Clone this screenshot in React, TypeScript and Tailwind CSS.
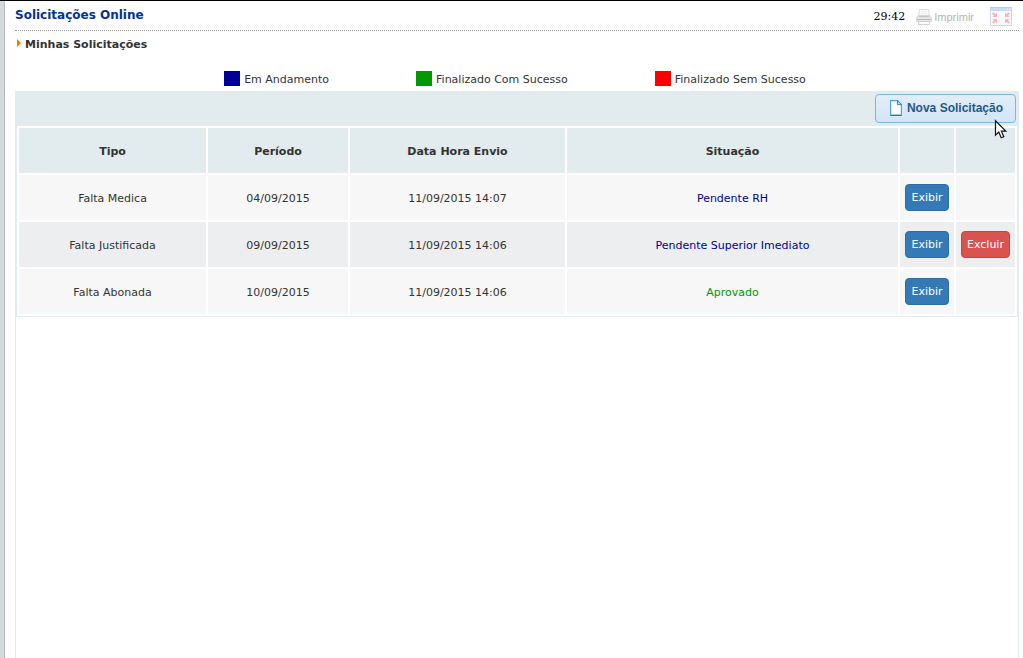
import React from "react";

type Status = "open" | "done";

interface RequestRow {
  type: string;
  period: string;
  sent: string;
  status: string;
  kind: Status;
  removable?: boolean;
}

const rows: RequestRow[] = [
  { type: "Falta Medica", period: "04/09/2015", sent: "11/09/2015 14:07", status: "Pendente RH", kind: "open" },
  { type: "Falta Justificada", period: "09/09/2015", sent: "11/09/2015 14:06", status: "Pendente Superior Imediato", kind: "open", removable: true },
  { type: "Falta Abonada", period: "10/09/2015", sent: "11/09/2015 14:06", status: "Aprovado", kind: "done" },
];

const statusColor: Record<Status, string> = {
  open: "text-[#000099]",
  done: "text-[#009900]",
};

function PrinterIcon() {
  return (
    <svg width="16" height="16" viewBox="0 0 16 16" aria-hidden="true">
      <path d="M2.5 7.5L3.5 .5H12.5L13.5 7.5Z" fill="#fafafa" stroke="#dcdcdc" />
      <path d="M5 2.5H11M5 4.5H11" stroke="#f0f0f0" />
      <path d="M2 6.5H14L15.5 9V12.5H.5V9Z" fill="#e4e4e4" stroke="#d8d8d8" />
      <path d="M3 7.5H13" stroke="#c4c4c4" />
      <path d="M1 10.5H15" stroke="#bdbdbd" />
      <path d="M2.5 12.5H13.5V15.5H2.5Z" fill="#fafafa" stroke="#d4d4d4" />
    </svg>
  );
}

function RestoreIcon() {
  return (
    <svg width="22" height="19" viewBox="0 0 22 19" aria-hidden="true">
      <rect x=".5" y=".5" width="21" height="18" fill="#f7faff" stroke="#c8d8f2" />
      <rect x="1" y="1" width="20" height="3" fill="#c9dbf8" />
      <path d="M0 .5H22" stroke="#b6cbef" />
      <path d="M17 2.5H18M19 2.5H20" stroke="#eef4fd" />
      <g fill="#fcb6ac">
        <path d="M7 5.5V10H2.5L4 8.5L2 6.7L3.4 5.3L5.4 7.1Z" />
        <path d="M15 5.5V10H19.5L18 8.5L20 6.7L18.6 5.3L16.6 7.1Z" />
        <path d="M7 16.5V12H2.5L4 13.5L2 15.3L3.4 16.7L5.4 14.9Z" />
        <path d="M15 16.5V12H19.5L18 13.5L20 15.3L18.6 16.7L16.6 14.9Z" />
      </g>
    </svg>
  );
}

function PageIcon() {
  return (
    <svg width="12" height="16" viewBox="0 0 12 16" aria-hidden="true">
      <path d="M.6 .6H7.6L11.4 4.4V15.4H.6Z" fill="#fff" stroke="#4ba3d3" strokeWidth="1.2" />
      <path d="M7.4 .6V4.6H11.4Z" fill="#cfe9f7" stroke="#2e86bd" />
      <path d="M1 15.3H11" stroke="#1f78b0" strokeWidth="1.2" />
    </svg>
  );
}

function Pointer() {
  return (
    <svg className="pointer-events-none absolute top-[28px] right-[10px]" width="14" height="21" viewBox="0 0 14 21" aria-hidden="true">
      <path d="M1.5 1.8V16.2L4.8 13L7.2 18.8L9.8 17.7L7.4 12.2H11.8Z" fill="#fff" stroke="#111" strokeWidth="1.2" />
    </svg>
  );
}

function Legend({ color, label }: { color: string; label: string }) {
  return (
    <li className="flex gap-1">
      <span className={`h-[15px] w-4 ${color}`} />
      <span className="pt-px">{label}</span>
    </li>
  );
}

export default function App() {
  const cell = "px-0 pt-[2px] pb-0 text-center";
  const actionCell = "p-0 text-center";
  const head = "h-[45px] bg-[#e2ebed] px-0 pt-[2px] pb-0 text-center font-bold";
  const action = "block mx-auto h-[27px] rounded border px-[5px] pt-px text-white";
  return (
    <div className="flex min-h-screen flex-col border-t border-black bg-white font-['DejaVu_Sans',Verdana,sans-serif] text-[11px] leading-4 text-[#333333]">
      <div className="flex grow border-l-4 border-[#d3dadd]">
        <main className="flex grow flex-col border-l border-[#b9bcbe] pr-1 pl-[10px]">
          <header className="flex h-[30px] items-center justify-between border-b border-dotted border-[#999999] pt-[2px] pr-[7px]">
            <h1 className="pb-1 text-xs font-bold text-[#003399]">Solicitações Online</h1>
            <div className="flex items-center">
              <time className="font-['DejaVu_Serif',serif] text-black">29:42</time>
              <a href="#imprimir" className="ml-[11px] flex items-center gap-[2px] font-['Liberation_Sans',Arial,sans-serif] text-[#b3b3b3]">
                <PrinterIcon />
                Imprimir
              </a>
              <button type="button" aria-label="Restaurar" className="ml-4">
                <RestoreIcon />
              </button>
            </div>
          </header>

          <h2 className="flex items-center gap-1 pt-[6px] font-bold">
            <svg className="ml-[2px] mb-1" width="4" height="8" viewBox="0 0 4 8" aria-hidden="true">
              <path d="M0 0L4 4L0 8Z" fill="#ff7200" />
            </svg>
            Minhas Solicitações
          </h2>

          <ul className="flex justify-center gap-[87px] pt-[18px] pr-1 pb-[3px]">
            <Legend color="bg-[#000099]" label="Em Andamento" />
            <Legend color="bg-[#009900]" label="Finalizado Com Sucesso" />
            <Legend color="bg-[#ff0000]" label="Finalizado Sem Sucesso" />
          </ul>

          <section className="grow border-x border-[#e2ebed]">
            <div className="relative flex h-[34px] items-center justify-end bg-[#e2ebed] pr-[2px]">
              <button
                type="button"
                className="flex h-[29px] items-center gap-[5px] rounded border border-[#79b7e7] bg-linear-to-b from-[#e2eef9] to-[#d3e5f5] pr-3 pl-[14px] font-['Liberation_Sans',Arial,sans-serif] text-xs font-bold text-[#1d5987]"
              >
                <PageIcon />
                Nova Solicitação
              </button>
              <Pointer />
            </div>
            <table className="w-full table-fixed border-separate border-spacing-[2px] border border-[#e2ebed]">
              <colgroup>
                <col className="w-[187px]" />
                <col className="w-[140px]" />
                <col className="w-[215px]" />
                <col />
                <col className="w-[54px]" />
                <col className="w-[59px]" />
              </colgroup>
              <thead>
                <tr>
                  <th className={head}>Tipo</th>
                  <th className={head}>Período</th>
                  <th className={head}>Data Hora Envio</th>
                  <th className={head}>Situação</th>
                  <td className={head} />
                  <td className={head} />
                </tr>
              </thead>
              <tbody>
                {rows.map((row) => (
                  <tr key={row.type} className="h-[45px] bg-[#f7f7f7] even:bg-[#eceef0]">
                    <td className={cell}>{row.type}</td>
                    <td className={cell}>{row.period}</td>
                    <td className={cell}>{row.sent}</td>
                    <td className={`${cell} ${statusColor[row.kind]}`}>{row.status}</td>
                    <td className={actionCell}>
                      <button type="button" className={`${action} border-[#2e6da4] bg-[#337ab7]`}>Exibir</button>
                    </td>
                    <td className={actionCell}>
                      {row.removable && (
                        <button type="button" className={`${action} border-[#d43f3a] bg-[#d9534f]`}>Excluir</button>
                      )}
                    </td>
                  </tr>
                ))}
              </tbody>
            </table>
          </section>
        </main>
      </div>
    </div>
  );
}
